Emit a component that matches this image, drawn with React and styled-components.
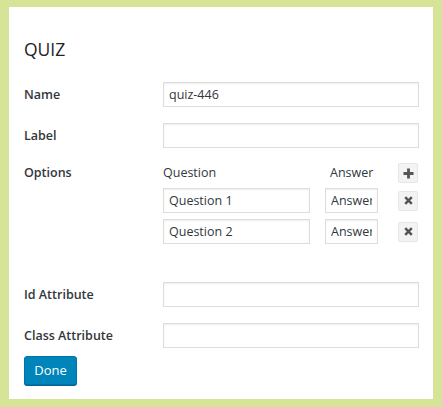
import styled, { createGlobalStyle } from 'styled-components';

const GlobalStyle = createGlobalStyle`
  html, body {
    margin: 0;
    padding: 0;
    background: #d5e497;
  }
  body {
    font-family: "Open Sans", "Noto Sans", "Liberation Sans", sans-serif;
    font-size: 13px;
    color: #23282d;
  }
  * { box-sizing: border-box; }
`;

const Panel = styled.div`
  margin: 7px 9px 8px;
  height: 392px;
  background: #fff;
  padding: 30px 15px 0;
`;

const Title = styled.h2`
  margin: 0 0 21px;
  font-size: 17.5px;
  font-weight: 400;
  line-height: 24px;
  color: #1d2327;
`;

const Row = styled.div`
  display: grid;
  grid-template-columns: 139px 1fr;
  align-items: ${(p) => (p.$top ? 'start' : 'center')};
  margin-bottom: ${(p) => p.$gap ?? 16}px;
`;

const Label = styled.label`
  font-weight: 600;
  font-size: 12.5px;
  line-height: 20px;
  color: #32373c;
`;

const Input = styled.input`
  display: block;
  width: ${(p) => p.$width || '256px'};
  height: 25px;
  margin: 0;
  padding: 0 5px;
  border: 1px solid #ddd;
  box-shadow: inset 0 1px 2px rgba(0, 0, 0, 0.07);
  background: #fff;
  font: inherit;
  font-size: 12.5px;
  color: #32373c;
  outline: none;
  overflow: hidden;
`;

const Options = styled.div`
  display: flex;
  flex-direction: column;
`;

const OptionLine = styled.div`
  display: grid;
  grid-template-columns: 147px 53px 20px;
  column-gap: 15px;
  align-items: center;
  margin-top: ${(p) => p.$mt || 0}px;
  & > :last-child { margin-left: 5px; }
`;

const Head = styled.span`
  font-size: 12.5px;
  line-height: 20px;
  color: #32373c;
  padding-left: ${(p) => p.$indent || 0}px;
  white-space: nowrap;
`;

const IconButton = styled.button`
  width: 20px;
  height: 20px;
  padding: 0;
  margin: 0;
  border: 1px solid #e6e6e6;
  border-radius: 2px;
  background: #f3f3f3;
  display: flex;
  align-items: center;
  justify-content: center;
  cursor: pointer;
`;

const Done = styled.button`
  width: 53px;
  height: 29px;
  margin: 0;
  padding: 0 0 2px;
  background: #0085ba;
  border: 1px solid #0073aa;
  border-radius: 3px;
  box-shadow: 0 1px 0 #006799;
  color: #fff;
  font: inherit;
  font-size: 13px;
  cursor: pointer;
`;

const PlusIcon = () => (
  <svg width="11" height="11" viewBox="0 0 11 11">
    <path d="M5.5 0.5V10.5M0.5 5.5H10.5" stroke="#555" strokeWidth="2.8" />
  </svg>
);

const CrossIcon = () => (
  <svg width="9" height="9" viewBox="0 0 9 9">
    <path d="M1.2 1.2L7.8 7.8M7.8 1.2L1.2 7.8" stroke="#555" strokeWidth="2.5" />
  </svg>
);

const questions = [
  { q: 'Question 1', a: 'Answer' },
  { q: 'Question 2', a: 'Answer' },
];

export default function App() {
  return (
    <>
      <GlobalStyle />
      <Panel>
        <Title>QUIZ</Title>
        <Row>
          <Label>Name</Label>
          <Input defaultValue="quiz-446" />
        </Row>
        <Row $gap={15}>
          <Label>Label</Label>
          <Input />
        </Row>
        <Row $top $gap={38}>
          <Label>Options</Label>
          <Options>
            <OptionLine>
              <Head>Question</Head>
              <Head $indent={5}>Answer</Head>
              <IconButton><PlusIcon /></IconButton>
            </OptionLine>
            {questions.map((item, i) => (
              <OptionLine key={i} $mt={i === 0 ? 5 : 6}>
                <Input $width="147px" defaultValue={item.q} />
                <Input $width="53px" defaultValue={item.a} />
                <IconButton><CrossIcon /></IconButton>
              </OptionLine>
            ))}
          </Options>
        </Row>
        <Row>
          <Label>Id Attribute</Label>
          <Input />
        </Row>
        <Row $gap={8}>
          <Label>Class Attribute</Label>
          <Input />
        </Row>
        <Done>Done</Done>
      </Panel>
    </>
  );
}
